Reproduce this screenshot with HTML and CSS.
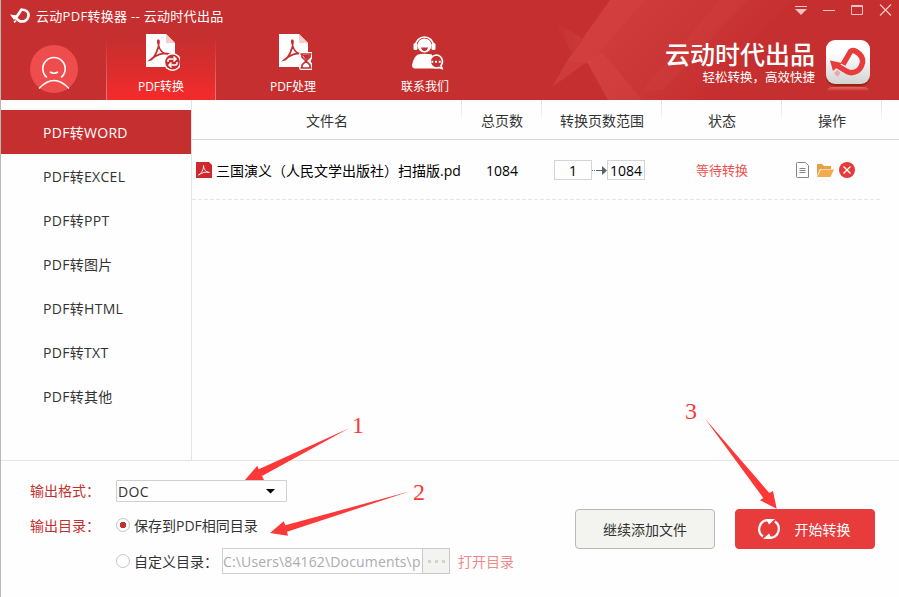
FILE: index.html
```html
<!DOCTYPE html>
<html lang="zh-CN">
<head>
    <meta charset="UTF-8">
    <meta name="viewport" content="width=device-width, initial-scale=1.0">
    <title>云动PDF转换器</title>
    <link rel="stylesheet" href="styles.css">
</head>
<body>
    <div class="window">
        <header class="header">
            <svg class="header-bg" width="380" height="100" viewBox="0 0 380 100">
                <defs>
                    <linearGradient id="beam" x1="0" y1="0" x2="1" y2="0.4">
                        <stop offset="0" stop-color="#d04040"/>
                        <stop offset="0.5" stop-color="#cc3838"/>
                        <stop offset="0.9" stop-color="#c62f2f"/>
                    </linearGradient>
                    <linearGradient id="fade" x1="0" y1="0" x2="1" y2="0">
                        <stop offset="0" stop-color="#c62f2f"/>
                        <stop offset="1" stop-color="#cc3a3a"/>
                    </linearGradient>
                </defs>
                <path d="M102 0H285L190 100H100L79 62L44 87L59 61Z" fill="url(#beam)"/>
                <path d="M47 22L74 38L64 53Z" fill="url(#fade)"/>
                <path d="M102 0H137L81 64L59 61Z" fill="#da4747" opacity=".3"/>
                <path d="M79 62L94 52L134 100H100Z" fill="#de5050" opacity=".25"/>
                <path d="M212 0H240L155 90H135Z" fill="#da4747" opacity=".2"/>
            </svg>
            <div class="titlebar">
                <svg width="20" height="18" viewBox="0 0 20 18">
                    <path d="M5.500 11.500L11.500 2.500Q19 3 18.500 9Q17 15.500 10 14.300L5.500 11" fill="none" stroke="#fff" stroke-width="2.700" stroke-linejoin="round"/>
                    <path d="M0 7.500L8 8.500L4 13Z M3.500 14.500l2-1.500 1 1.500-2 1.500Z" fill="#fff"/>
                </svg>
                <span class="title">云动PDF转换器 -- 云动时代出品</span>
                <svg class="controls" width="98" height="14" viewBox="0 0 98 14" fill="none" stroke="#f0c4c4">
                    <path d="M0 3.500H12"/>
                    <path d="M0 6H12L6 12Z" fill="#f0c4c4" stroke="none"/>
                    <path d="M28 7.500H40"/>
                    <path d="M56.500 2.500H67.500V11.500H56.500ZM56.500 3.500H67.500"/>
                    <path d="M85 1.500L96 12.500M96 1.500L85 12.500" stroke-width="1.300"/>
                </svg>
            </div>
            <div class="toolbar">
                <svg class="avatar" width="48" height="48" viewBox="0 0 48 48" fill="none">
                    <circle cx="24" cy="24" r="24" fill="#ef4d4d"/>
                    <path d="M17 32.500A11.200 11.200 0 1 1 31 32.500M9 43.500Q24 27.500 39 43.500M20 27Q24 29.500 28 27" stroke="#fff" stroke-width="1.600"/>
                </svg>
                <nav class="tabs">
                    <a class="tab active">
                        <svg width="38" height="40" viewBox="-2 0 38 40">
                            <path d="M2 1H22L31 10V34H2Z" fill="#fff"/>
                            <path d="M22 1L31 10H22Z" fill="#f6cccc"/>
                            <path d="M6 27C10 26 15 16 15 9C15 6 13 7 14 10C15 17 19 22 25 21C20 19 11 22 6 27Z" fill="none" stroke="#c62f2f" stroke-width="1.700"/>
                            <circle cx="28.500" cy="29" r="9" fill="#fff"/>
                            <circle cx="28.500" cy="29" r="7.400" fill="#c62f2f"/>
                            <path d="M24 29V27.500Q24 26 26 26H31M29.500 23.500L32 26L29.500 28.500M33 29V30.500Q33 32 31 32H26M27.500 29.500L25 32L27.500 34.500" fill="none" stroke="#fff" stroke-width="1.500"/>
                        </svg>
                        <span>PDF转换</span>
                    </a>
                    <a class="tab">
                        <svg width="38" height="40" viewBox="-1 0 38 40">
                            <path d="M4 1H24L33 10V34H4Z" fill="#fff"/>
                            <path d="M24 1L33 10H24Z" fill="#f6cccc"/>
                            <path d="M9 27C13 26 18 16 18 9C18 6 16 7 17 10C18 17 22 22 28 21C23 19 14 22 9 27Z" fill="none" stroke="#c62f2f" stroke-width="1.700"/>
                            <path d="M26 19H36Q38 19 38 21V24L35.500 28L38 32V35Q38 37 36 37H26Q24 37 24 35V32L26.500 28L24 24V21Q24 19 26 19Z" fill="#fff"/>
                            <path d="M25.500 21H36.500M25.500 35H36.500M27 21V24L31 28L27 32V35M35 21V24L31 28L35 32V35" fill="none" stroke="#c62f2f" stroke-width="1.700"/>
                            <path d="M27.500 22H34.500V24L31 27Z" fill="#c62f2f"/>
                        </svg>
                        <span>PDF处理</span>
                    </a>
                    <a class="tab">
                        <svg width="38" height="40" viewBox="0 0 38 40">
                            <path d="M9.500 13A9 9 0 0 1 27.500 13" fill="none" stroke="#fff" stroke-width="1.700"/>
                            <rect x="7.500" y="10" width="4" height="7" rx="1.500" fill="#fff"/>
                            <rect x="25.500" y="10" width="4" height="7" rx="1.500" fill="#fff"/>
                            <circle cx="18.500" cy="12.500" r="7" fill="#fff"/>
                            <path d="M15 14.500H22Q21 18 18.500 18Q16 18 15 14.500Z" fill="#c62f2f"/>
                            <path d="M12 21.500Q18 20 26 21.500L28 35.500H9Q6 35.500 6 32Q7.500 24 12 21.500Z" fill="#fff"/>
                            <path d="M30 22A6.500 6.500 0 1 0 33 34.500L36 35.500L35 32.500A6.500 6.500 0 0 0 30 22Z" fill="#c62f2f" stroke="#fff" stroke-width="1.700"/>
                            <path d="M25.300 27.700h2v2h-2zM29 27.700h2v2h-2zM32.700 27.700h2v2h-2z" fill="#fff"/>
                        </svg>
                        <span>联系我们</span>
                    </a>
                </nav>
                <div class="brand">
                    <div class="brand-name">云动时代出品</div>
                    <div class="brand-slogan">轻松转换，高效快捷</div>
                </div>
                <svg class="brand-logo" width="46" height="54" viewBox="0 0 46 54">
                    <defs>
                        <linearGradient id="tile" x1="0" y1="0" x2="0" y2="1">
                            <stop offset="0.3" stop-color="#fff"/>
                            <stop offset="1" stop-color="#d2d2d2"/>
                        </linearGradient>
                        <linearGradient id="mirror" x1="0" y1="0" x2="0" y2="1">
                            <stop offset="0" stop-color="#da6a6a"/>
                            <stop offset="1" stop-color="#c62f2f"/>
                        </linearGradient>
                    </defs>
                    <path d="M2 51Q2 47 8 47H38Q44 47 44 51Z" fill="url(#mirror)"/>
                    <rect x="1" y="2" width="44" height="44" rx="9" fill="#982410"/>
                    <rect x="1" y="0" width="44" height="44" rx="9" fill="url(#tile)"/>
                    <path d="M18 24.500L25.500 11.500Q27.500 9.500 31 11.500Q38.500 16 37.500 22.500Q36 30 30 32Q26 33.500 22 31.500L12 25.500" fill="none" stroke="#e83b3b" stroke-width="5.500" stroke-linejoin="round"/>
                    <path d="M5 20.500L17 23L8 31Z" fill="#e83b3b"/>
                    <path d="M12 30L15.500 32.500L13 37L9 33.500Z" fill="#e8a8a8"/>
                </svg>
            </div>
        </header>

        <div class="content">
            <aside class="sidebar">
                <a class="side-item active">PDF转WORD</a>
                <a class="side-item">PDF转EXCEL</a>
                <a class="side-item">PDF转PPT</a>
                <a class="side-item">PDF转图片</a>
                <a class="side-item">PDF转HTML</a>
                <a class="side-item">PDF转TXT</a>
                <a class="side-item">PDF转其他</a>
            </aside>
            <main class="files">
                <div class="grid-row head">
                    <div>文件名</div>
                    <div>总页数</div>
                    <div>转换页数范围</div>
                    <div>状态</div>
                    <div>操作</div>
                </div>
                <div class="grid-row file">
                    <div class="file-name">
                        <svg width="16" height="16" viewBox="0 0 16 16">
                            <path d="M0 0H13L16 3V16H0Z" fill="#d0282e"/>
                            <path d="M2.500 13C5 12 8 7 7.500 3.500C7.500 7 10 10.500 13.500 10.500C10 9.500 6 10.500 2.500 13Z" fill="none" stroke="#fff" stroke-width=".9"/>
                        </svg>
                        <span>三国演义（人民文学出版社）扫描版.pd</span>
                    </div>
                    <div class="pages">1084</div>
                    <div class="range">
                        <span class="num">1</span>
                        <svg width="15" height="10" viewBox="0 0 15 10">
                            <path d="M0 5.500H5" stroke="#566" stroke-dasharray="1 1"/>
                            <path d="M5 5.500H11" stroke="#566"/>
                            <path d="M10 1L15 5.500L10 10Z" fill="#566"/>
                        </svg>
                        <span class="num">1084</span>
                    </div>
                    <div class="status">等待转换</div>
                    <div class="actions">
                        <svg width="13" height="16" viewBox="0 0 13 16" fill="none" stroke="#858585">
                            <path d="M1.500 .5H9.500L12.500 3.500V15.500H1.500Q.5 15.500 .5 14.500V1.500Q.5 .5 1.500 .5ZM3.500 6.500H9.500M3.500 8.500H9.500M3.500 10.500H9.500"/>
                        </svg>
                        <svg width="17" height="13" viewBox="0 0 17 13">
                            <path d="M0 0H5L7 2H14V5H3L0 12Z" fill="#e9a044"/>
                            <path d="M4 5.500H17L13.500 13H0Z" fill="#f2ab4e"/>
                        </svg>
                        <svg width="16" height="16" viewBox="0 0 16 16">
                            <circle cx="8" cy="8" r="8" fill="#e63a3a"/>
                            <path d="M4.500 4.500L11.500 11.500M11.500 4.500L4.500 11.500" stroke="#fff" stroke-width="1.400"/>
                        </svg>
                    </div>
                </div>
            </main>
        </div>

        <footer class="footer">
            <div class="options">
                <label class="option-label">输出格式：</label>
                <div class="select">
                    <span>DOC</span>
                    <svg width="9" height="5" viewBox="0 0 9 5"><path d="M0 0H9L4.500 4.500Z" fill="#000"/></svg>
                </div>
                <label class="option-label dir">输出目录：</label>
                <div class="choice"><span class="radio checked"></span>保存到PDF相同目录</div>
                <div class="choice custom">
                    <span class="radio"></span><span class="custom-label">自定义目录：</span>
                    <span class="path">C:\Users\84162\Documents\p</span>
                    <span class="browse"><i></i><i></i><i></i></span>
                    <a class="open">打开目录</a>
                </div>
            </div>
            <div class="buttons">
                <button class="btn">继续添加文件</button>
                <button class="btn primary">
                    <svg width="22" height="22" viewBox="0 0 22 22">
                        <path d="M5 18.500A9 9 0 0 1 9.500 2.200M17 3.500A9 9 0 0 1 12.500 19.800" fill="none" stroke="#fff" stroke-width="2.200"/>
                        <path d="M8 1H17L11 6.500ZM14 21H5L11 15.500Z" fill="#fff"/>
                    </svg>
                    开始转换
                </button>
            </div>
        </footer>
    </div>

    <!-- step arrows over the window -->
    <svg class="steps" width="899" height="597" viewBox="0 0 899 597">
        <path d="M245 480L257.300 465.700L258.700 469.300L349 428.300L262 476L264 480Z"/>
        <path d="M270 533L283.700 521.300L285.300 525.300L410 491.300L287 531.700L288 535.700Z"/>
        <path d="M776.700 508.700L773 491L769.300 493L704.700 418.300L763.300 498L760 500.300Z"/>
        <text x="352" y="433">1</text>
        <text x="413" y="500">2</text>
        <text x="685" y="419">3</text>
    </svg>
</body>
</html>
```
FILE: styles.css
```css
* { box-sizing: border-box; margin: 0; padding: 0; }
body {
    font-family: "Open Sans", "Noto Sans CJK SC", sans-serif; font-size: 14px; color: #333333;
    background-color: #fefefe; overflow: hidden;
}
svg { display: block; flex: none; }
.window {
    width: 899px; height: 597px; border-left: 1px solid #b8b8b8;
    display: flex; flex-direction: column;
}

/* header */
.header { height: 100px; background-color: #c62f2f; color: #ffffff; position: relative; flex: none; }
.header-bg { position: absolute; left: 507px; top: 0; }
.titlebar { height: 32px; display: flex; align-items: center; padding: 0 6px 0 9px; position: relative; }
.title { margin-left: 6px; font-size: 13px; line-height: 32px; letter-spacing: 0.3px; white-space: nowrap; }
.controls { margin-left: auto; margin-bottom: 12px; }
.toolbar { height: 68px; display: flex; align-items: flex-start; padding-left: 29px; position: relative; }
.avatar { margin-top: 13px; }
.tabs { display: flex; gap: 22px; margin-left: 28px; }
.tab {
    width: 110px; height: 68px; display: flex; flex-direction: column; align-items: center;
    font-size: 12px; line-height: 18px; padding-top: 1px; border: solid transparent; border-width: 0 1px;
}
.tab span { margin-top: 5px; }
.tab.active {
    background: linear-gradient(#c62f2f 10%, #d82d2d 50%, #f12b2b 90%);
    border-image: linear-gradient(#c62f2f 10%, #f08080) 1;
    border-width: 0 1px;
}
.brand { margin-left: auto; text-align: right; padding-top: 8px; white-space: nowrap; }
.brand-name { font-size: 25px; line-height: 29px; font-weight: 500; }
.brand-slogan { font-size: 12.5px; line-height: 17px; }
.brand-logo { margin: 8px 28px 0 10px; }

/* content */
.content { height: 361px; display: flex; border-bottom: 1px solid #e4e4e4; flex: none; }
.sidebar { width: 191px; border-right: 1px solid #e4e4e4; padding-top: 10px; }
.side-item { display: block; height: 44px; line-height: 45px; padding-left: 42px; letter-spacing: 0.3px; }
.side-item.active { background-color: #c62f2f; color: #ffffff; }
.files { flex: 1; }
.grid-row { display: grid; grid-template-columns: 270px 80px 120px 120px 100px; }
.head { height: 40px; border-bottom: 1px solid #d8dadb; text-align: center; line-height: 41px; }
.head div {
    background: linear-gradient(#e2e2e2, #f4f4f4) right top / 1px 18px no-repeat;
}
.file {
    width: 688px; height: 60px; align-items: center; color: #000000;
    background: repeating-linear-gradient(90deg, #e6e6e6 0 4px, transparent 4px 6px) left bottom / 100% 1px no-repeat;
}
.file-name { display: flex; align-items: center; gap: 4px; padding-left: 4px; white-space: nowrap; }
.pages { text-align: center; }
.range { display: flex; align-items: center; padding-left: 12px; }
.num { width: 38px; height: 20px; border: 1px solid #d4d4d4; text-align: center; line-height: 19px; }
.status { text-align: center; color: #f05050; font-size: 13px; padding-bottom: 2px; }
.actions { display: flex; align-items: center; gap: 5px; padding-left: 14px; }
.actions svg:first-child { margin-right: 3px; }

/* footer */
.footer { flex: 1; display: flex; justify-content: space-between; }
.options {
    display: grid; grid-template-columns: 86px auto; grid-template-rows: 24px 36px 36px;
    padding: 18px 0 0 29px; align-items: center; align-content: start;
}
.option-label { color: #c62f2f; white-space: nowrap; padding-bottom: 2px; }
.option-label.dir { padding: 7px 0 0; }
.select {
    width: 171px; height: 22px; border: 1px solid #d0d0d0; border-radius: 1px; letter-spacing: 0.3px;
    display: flex; align-items: center; justify-content: space-between; padding: 0 11px 0 1px;
}
.choice { display: flex; align-items: center; white-space: nowrap; padding-top: 8px; }
.radio { width: 14px; height: 14px; border: 1px solid #c4c4c4; border-radius: 50%; margin-right: 4px; flex: none; }
.radio.checked { background: radial-gradient(circle, #c62f2f 3px, transparent 3.5px); }
.custom { grid-column: 2; }
.custom-label { width: 88px; }
.path {
    width: 200px; height: 26px; border: 1px solid #d0d0d0; border-right: 0; color: #a8adad;
    line-height: 25px; letter-spacing: 0.15px;
}
.browse {
    width: 28px; height: 26px; border: 1px solid #c8c8c8; background-color: #f3f4ef;
    display: flex; align-items: center; justify-content: center; gap: 4px;
}
.browse i { width: 3px; height: 3px; background-color: #d2d2d2; }
.open { margin-left: 8px; color: #ef8a8a; }
.buttons { display: flex; gap: 20px; padding: 48px 24px 0 0; }
.btn {
    width: 140px; height: 40px; border: 1px solid #b8b8b8; border-radius: 4px; background-color: #f3f4ef;
    font: inherit; color: #333333; display: flex; align-items: center; justify-content: center;
}
.btn.primary { background-color: #e83b3b; border-color: #e83b3b; color: #ffffff; gap: 15px; padding-right: 2px; }

.steps { position: absolute; left: 0; top: 0; fill: #fc3838; pointer-events: none; }
.steps text { font-family: "Liberation Serif", serif; font-size: 24px; }
```
